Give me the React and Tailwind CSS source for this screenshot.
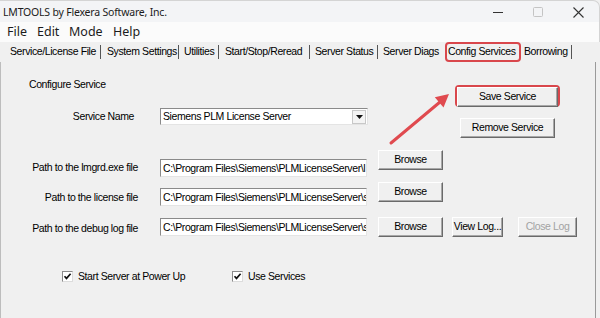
const btn =
  "h-[20px] flex items-center justify-center bg-[#f0f0f0] border border-t-white border-l-white border-r-[#6a6a6a] border-b-[#6a6a6a] shadow-[inset_-1px_-1px_0_#a8a8a8] whitespace-nowrap";
const field =
  "h-[18px] bg-white border border-t-[#8a8a8a] border-l-[#8a8a8a] border-r-[#e4e4e4] border-b-[#e4e4e4] overflow-hidden whitespace-nowrap pl-[2px] leading-[16px]";

function Bar() {
  return <span className="w-px h-[14px] bg-[#555555] shrink-0" />;
}

function Check({ label, className }) {
  return (
    <div className={"flex items-center " + (className || "")}>
      <span className="w-[11px] h-[11px] bg-white border border-t-[#8a8a8a] border-l-[#8a8a8a] border-r-[#dcdcdc] border-b-[#dcdcdc] flex items-center justify-center">
        <svg width="9" height="9" viewBox="0 0 9 9">
          <path d="M1.5 4.2 L3.5 6.4 L7.6 1.8" stroke="#111" strokeWidth="1.7" fill="none" />
        </svg>
      </span>
      <span className="ml-[5px] leading-[14px]">{label}</span>
    </div>
  );
}

export default function App() {
  const path = "C:\\Program Files\\Siemens\\PLMLicenseServer\\";
  return (
    <div className="relative w-[600px] h-[318px] overflow-hidden bg-[#f0f0f0] flex flex-col font-['Liberation_Sans',Arial,sans-serif] text-[10.5px] tracking-[-0.4px] text-black">
      {/* Title bar */}
      <div className="h-[22px] shrink-0 flex items-center bg-[#f3f4f6] rounded-tr-[7px] border-r border-t border-[#d4d4d4]">
        <span className="ml-[3px] pt-[3px] font-['Noto_Sans',sans-serif] text-[10.5px] tracking-[-0.2px] text-[#1b1b1b]">
          LMTOOLS by Flexera Software, Inc.
        </span>
        <div className="ml-auto mr-[1px] flex items-center pt-[1px]">
          <div className="w-[40px] flex justify-center">
            <svg width="10" height="10" viewBox="0 0 10 10">
              <path d="M0 5.5 H10" stroke="#333" strokeWidth="1" />
            </svg>
          </div>
          <div className="w-[40px] flex justify-center">
            <svg width="10" height="10" viewBox="0 0 10 10">
              <rect x="0.5" y="0.5" width="9" height="9" rx="1" stroke="#c4c4c4" fill="none" />
            </svg>
          </div>
          <div className="w-[40px] flex justify-center">
            <svg width="11" height="11" viewBox="0 0 11 11">
              <path d="M0.5 0.5 L10.5 10.5 M10.5 0.5 L0.5 10.5" stroke="#333" strokeWidth="1.1" />
            </svg>
          </div>
        </div>
      </div>

      {/* Menu bar */}
      <div className="h-[20px] shrink-0 flex items-center bg-[#fbfbfb] font-['Noto_Sans',sans-serif] text-[12.5px] tracking-[0px] text-[#1b1b1b] pl-[7px] border-r border-[#d4d4d4]">
        <span className="w-[30px]">File</span>
        <span className="w-[32px]">Edit</span>
        <span className="w-[44px]">Mode</span>
        <span>Help</span>
      </div>

      {/* Tabs */}
      <div className="h-[20px] shrink-0 flex items-center pl-[10px] whitespace-nowrap">
        <span className="w-[90px]">Service/License File</span>
        <Bar />
        <span className="ml-[6px] w-[71px]">System Settings</span>
        <Bar />
        <span className="ml-[5px] w-[34px]">Utilities</span>
        <Bar />
        <span className="ml-[6px] w-[84px]">Start/Stop/Reread</span>
        <Bar />
        <span className="ml-[5px] w-[62px]">Server Status</span>
        <Bar />
        <span className="ml-[5px] w-[57px]">Server Diags</span>
        <span className="ml-[5px] w-[76px] h-[20px] border-2 border-[#d9474c] rounded-[4px] flex items-center pl-[1px]">
          Config Services
        </span>
        <span className="ml-[3px] w-[47px]">Borrowing</span>
        <Bar />
      </div>

      {/* Panel */}
      <div className="flex-1 mr-[4px] border-r border-l border-r-[#9a9a9a] border-l-[#bdbdbd] pt-[15px]">
        <div className="flex">
          <div className="w-[454px]">
            <div className="pl-[28px] h-[14px] leading-[14px]">Configure Service</div>
            <div className="flex items-center mt-[17px]">
              <div className="w-[137px] text-right pr-[4px]">Service Name</div>
              <div className="ml-[22px] w-[208px] h-[17px] bg-white border border-t-[#8a8a8a] border-l-[#8a8a8a] border-r-[#e4e4e4] border-b-[#e4e4e4] flex items-center">
                <span className="pl-[2px] flex-1 whitespace-nowrap">Siemens PLM License Server</span>
                <span className="w-[14px] h-[14px] mr-[1px] bg-[#f4f4f4] border border-[#c8c8c8] flex items-center justify-center">
                  <svg width="7" height="4" viewBox="0 0 7 4">
                    <path d="M0 0 H7 L3.5 4 Z" fill="#111" />
                  </svg>
                </span>
              </div>
            </div>
          </div>
          <div className="flex flex-col">
            <div className="mt-[8px] w-[105px] h-[22px] border-2 border-[#d9474c] rounded-[4px]">
              <div className={btn + " h-[18px]"}>Save Service</div>
            </div>
            <div className={btn + " mt-[11px] ml-[5px] w-[95px]"}>Remove Service</div>
          </div>
        </div>

        {/* Row 1 */}
        <div className="flex items-start mt-[12px]">
          <div className="w-[137px] text-right mt-[10px] leading-[14px]">Path to the lmgrd.exe file</div>
          <div className={field + " ml-[22px] mt-[9px] w-[207px]"}>{path + "l"}</div>
          <div className={btn + " ml-[11px] w-[65px]"}>Browse</div>
        </div>
        {/* Row 2 */}
        <div className="flex items-start mt-[5px]">
          <div className="w-[137px] text-right mt-[8px] leading-[14px]">Path to the license file</div>
          <div className={field + " ml-[22px] mt-[6px] w-[207px]"}>{path + "s"}</div>
          <div className={btn + " ml-[11px] w-[65px]"}>Browse</div>
        </div>
        {/* Row 3 */}
        <div className="flex items-start mt-[11px]">
          <div className="w-[137px] text-right mt-[4px] leading-[14px]">Path to the debug log file</div>
          <div className={field + " ml-[22px] mt-[1px] w-[207px]"}>{path + "s"}</div>
          <div className={btn + " ml-[11px] w-[65px]"}>Browse</div>
          <div className={btn + " ml-[9px] w-[51px]"}>View Log...</div>
          <div className={btn + " ml-[15px] w-[59px] text-[#a3a3a3]"}>Close Log</div>
        </div>

        {/* Checkboxes */}
        <div className="flex items-center mt-[32px] pl-[61px]">
          <Check label="Start Server at Power Up" className="w-[170px]" />
          <Check label="Use Services" />
        </div>
      </div>

      {/* Annotation arrow */}
      <svg className="absolute left-0 top-0 pointer-events-none" width="600" height="318" viewBox="0 0 600 318">
        <line x1="391" y1="143" x2="440" y2="102" stroke="#e04a4f" strokeWidth="3" strokeLinecap="round" />
        <polygon points="449,94 443.5,107.5 434.8,97.2" fill="#e04a4f" />
      </svg>
    </div>
  );
}
